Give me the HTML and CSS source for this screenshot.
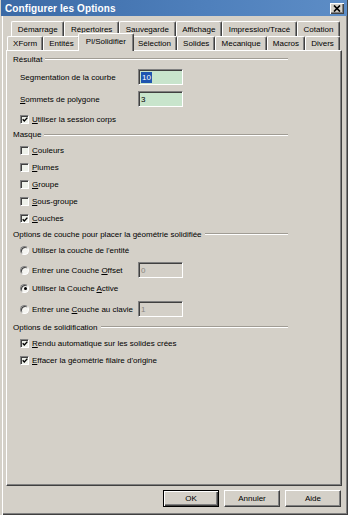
FILE: index.html
```html
<!DOCTYPE html>
<html>
<head>
    <title>Configurer les Options</title>
    <meta charset="UTF-8">
    <link rel="stylesheet" href="styles.css">
</head>
<body>
<div class="window">
    <div class="titlebar">
        <span class="title">Configurer les Options</span>
        <span class="close">
            <svg width="8" height="7" viewBox="0 0 8 7"><path d="M1 0.5l6 6M7 0.5l-6 6" stroke="#000" stroke-width="1.7" fill="none"/></svg>
        </span>
    </div>

    <div class="tab-row row-back">
        <span class="tab">Démarrage</span>
        <span class="tab">Répertoires</span>
        <span class="tab">Sauvegarde</span>
        <span class="tab">Affichage</span>
        <span class="tab">Impression/Tracé</span>
        <span class="tab">Cotation</span>
    </div>
    <div class="tab-row row-front">
        <span class="tab">XForm</span>
        <span class="tab">Entités</span>
        <span class="tab active">Pl/Solidifier</span>
        <span class="tab">Sélection</span>
        <span class="tab">Solides</span>
        <span class="tab">Mecanique</span>
        <span class="tab">Macros</span>
        <span class="tab">Divers</span>
    </div>

    <div class="panel">
        <!-- Résultat -->
        <div class="group-title">Résultat</div>
        <div class="field first">
            <span class="label">Segmentation de la courbe</span>
            <span class="input"><span class="selected">10</span></span>
        </div>
        <div class="field second">
            <span class="label"><u>S</u>ommets de polygone</span>
            <span class="input">3</span>
        </div>
        <div class="check session">
            <span class="box checked"><svg width="7" height="7" viewBox="0 0 7 7"><path d="M0.8 3.3l1.9 2 3.6-4" stroke="#000" stroke-width="1.6" fill="none"/></svg></span>
            <span><u>U</u>tiliser la session corps</span>
        </div>

        <!-- Masque -->
        <div class="group-title masque">Masque</div>
        <div class="check tall"><span class="box"></span><span><u>C</u>ouleurs</span></div>
        <div class="check tall"><span class="box"></span><span><u>P</u>lumes</span></div>
        <div class="check tall"><span class="box"></span><span><u>G</u>roupe</span></div>
        <div class="check tall"><span class="box"></span><span><u>S</u>ous-groupe</span></div>
        <div class="check tall">
            <span class="box checked"><svg width="7" height="7" viewBox="0 0 7 7"><path d="M0.8 3.3l1.9 2 3.6-4" stroke="#000" stroke-width="1.6" fill="none"/></svg></span>
            <span><u>C</u>ouches</span>
        </div>

        <!-- Options de couche -->
        <div class="group-title couche">Options de couche pour placer la géométrie solidifiée</div>
        <div class="radio-row">
            <span class="radio"></span>
            <span class="label">Utiliser la couche de l'entité</span>
        </div>
        <div class="radio-row gap2">
            <span class="radio"></span>
            <span class="label">Entrer une Couche <u>O</u>ffset</span>
            <span class="input disabled">0</span>
        </div>
        <div class="radio-row">
            <span class="radio on"></span>
            <span class="label">Utiliser la Couche <u>A</u>ctive</span>
        </div>
        <div class="radio-row gap3">
            <span class="radio"></span>
            <span class="label">Entrer une <u>C</u>ouche au clavie</span>
            <span class="input disabled">1</span>
        </div>

        <!-- Options de solidification -->
        <div class="group-title solid">Options de solidification</div>
        <div class="check">
            <span class="box checked"><svg width="7" height="7" viewBox="0 0 7 7"><path d="M0.8 3.3l1.9 2 3.6-4" stroke="#000" stroke-width="1.6" fill="none"/></svg></span>
            <span><u>R</u>endu automatique sur les solides crées</span>
        </div>
        <div class="check gap1">
            <span class="box checked"><svg width="7" height="7" viewBox="0 0 7 7"><path d="M0.8 3.3l1.9 2 3.6-4" stroke="#000" stroke-width="1.6" fill="none"/></svg></span>
            <span><u>E</u>ffacer la géométrie filaire d'origine</span>
        </div>
    </div>

    <div class="buttons">
        <button class="default">OK</button>
        <button>Annuler</button>
        <button>Aide</button>
    </div>
</div>
</body>
</html>
```

FILE: styles.css
```css
* {
    box-sizing: border-box;
}
body {
    margin: 0;
    background-color: #d4d0c8;
    font-family: "Liberation Sans", Arial, sans-serif;
    font-size: 8px;
    color: #000;
}
.window {
    width: 348px;
    height: 515px;
    background-color: #d4d0c8;
    box-shadow: inset 2px 0 #d4d0c8, inset 3px 0 #fff,
                inset -1px -1px #404040, inset -2px -2px #808080;
    overflow: hidden;
}
.titlebar {
    height: 16px;
    margin: 0 1px;
    padding: 0 3px 0 4px;
    display: flex;
    align-items: center;
    justify-content: space-between;
    background: linear-gradient(to right, #3b6aa6, #4f80bc 60%, #5d8dc6);
}
.title {
    color: white;
    font-weight: bold;
    font-size: 10px;
    letter-spacing: 0.1px;
}
.close {
    width: 14px;
    height: 11px;
    display: flex;
    align-items: center;
    justify-content: center;
    background-color: #d4d0c8;
    box-shadow: inset 1px 1px #fff, inset -1px -1px #404040, inset -2px -2px #808080;
}

/* onglets */
.tab-row {
    display: flex;
}
.row-back {
    height: 15px;
    margin: 5px 8px 0 11px;
}
.row-front {
    height: 14px;
    margin: 0 8px 0 7px;
}
.tab {
    flex: 1 1 auto;
    display: flex;
    align-items: center;
    justify-content: center;
    padding: 0 3px;
    white-space: nowrap;
    border-top: 1px solid #fff;
    border-left: 1px solid #fff;
    border-right: 1px solid #404040;
    border-radius: 2px 2px 0 0;
    box-shadow: inset -1px 0 #808080;
    background-color: #d4d0c8;
}
.tab.active {
    position: relative;
    z-index: 1;
    height: 18px;
    margin: -3px -2px -1px -2px;
    padding: 0 5px 2px;
}

/* panneau */
.panel {
    height: 436px;
    margin: 0 6px;
    padding-left: 6px;
    border: 1px solid;
    border-color: #fff #404040 #404040 #fff;
    box-shadow: inset -1px -1px #808080;
}
.group-title {
    height: 16px;
    margin-right: 53px;
    display: flex;
    align-items: center;
    white-space: nowrap;
}
.group-title::after {
    content: "";
    flex: 1;
    margin-left: 3px;
    border-top: 1px solid #a09c94;
    border-bottom: 1px solid #fff;
}
.group-title.masque {
    height: 15px;
}
.group-title.couche {
    height: 14px;
}
.group-title.solid {
    margin-top: 1px;
}

.field {
    height: 16px;
    padding-left: 7px;
    display: flex;
    align-items: center;
}
.field.first {
    margin-top: 2px;
}
.field.second {
    margin-top: 6px;
}
.field .label {
    width: 118px;
}
.input {
    width: 45px;
    height: 16px;
    padding-left: 2px;
    display: flex;
    align-items: center;
    background-color: #c8e4cc;
    border: 1px solid;
    border-color: #808080 #fff #fff #808080;
    box-shadow: inset 1px 1px #404040;
}
.input.disabled {
    background-color: #d4d0c8;
    color: #8a8780;
}
.selected {
    background-color: #1f55b0;
    color: white;
    padding: 0 1px;
    line-height: 11px;
}

.check {
    height: 16px;
    padding-left: 7px;
    display: flex;
    align-items: center;
    gap: 3px;
}
.check.session {
    margin-top: 4px;
}
.check.tall {
    height: 17px;
}
.check.gap1 {
    margin-top: 1px;
}
.box {
    width: 9px;
    height: 9px;
    display: flex;
    align-items: center;
    justify-content: center;
    background-color: #eef1ea;
    border: 1px solid;
    border-color: #808080 #fff #fff #808080;
    box-shadow: inset 1px 1px #404040;
}
.box svg {
    margin: 1px 0 0 1px;
}

.radio-row {
    height: 18px;
    padding-left: 7px;
    display: flex;
    align-items: center;
    gap: 3px;
}
.radio-row.gap2 {
    margin-top: 2px;
}
.radio-row.gap3 {
    margin-top: 3px;
}
.radio-row .label {
    width: 103px;
    white-space: nowrap;
}
.radio {
    width: 9px;
    height: 9px;
    border-radius: 50%;
    display: flex;
    align-items: center;
    justify-content: center;
    background-color: #f4f4f0;
    border: 1px solid;
    border-color: #808080 #fff #fff #808080;
    box-shadow: inset 1px 1px #404040;
}
.radio.on::after {
    content: "";
    width: 3px;
    height: 3px;
    margin: 1px 0 0 1px;
    border-radius: 50%;
    background-color: #000;
}

/* boutons */
.buttons {
    margin: 4px 7px 0 0;
    display: flex;
    justify-content: flex-end;
    gap: 5px;
}
button {
    width: 56px;
    height: 17px;
    padding: 0;
    font: inherit;
    color: #000;
    background-color: #d4d0c8;
    border: 1px solid;
    border-color: #fff #404040 #404040 #fff;
    box-shadow: inset -1px -1px #808080;
}
button.default {
    border-color: #000;
    box-shadow: inset 1px 1px #fff, inset -1px -1px #404040, inset -2px -2px #808080;
}
```
